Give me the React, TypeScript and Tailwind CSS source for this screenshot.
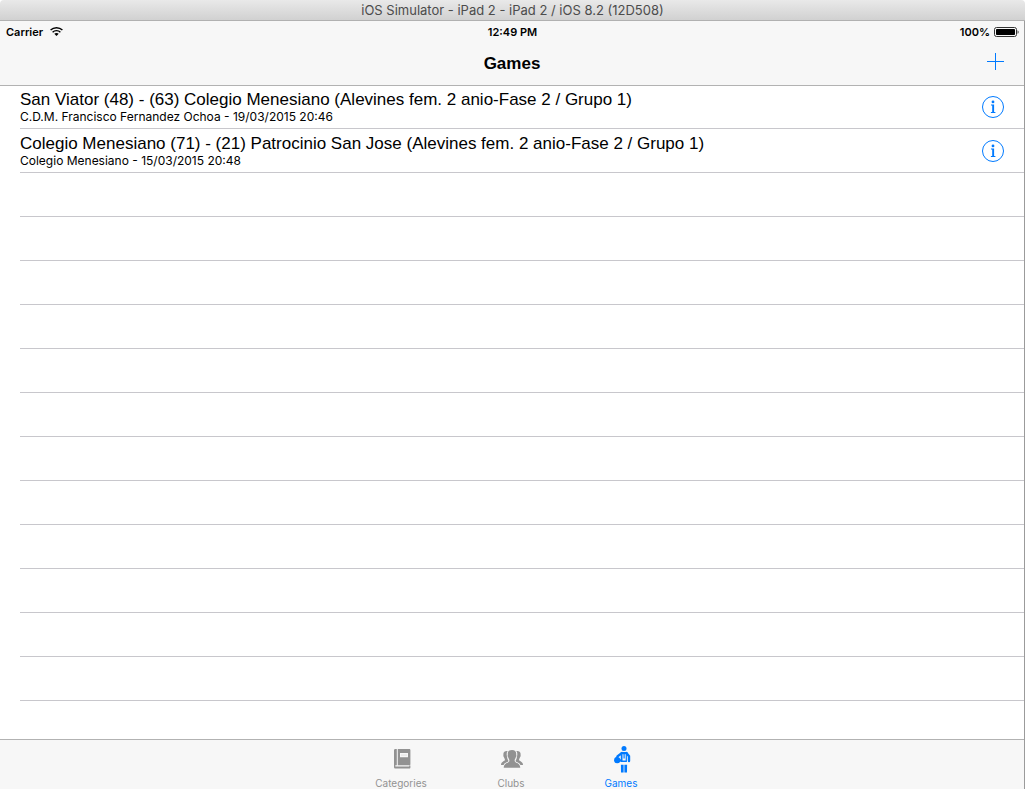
import React from "react";

type Game = { title: string; detail: string };

const games: Game[] = [
  {
    title: "San Viator (48) - (63) Colegio Menesiano (Alevines fem. 2 anio-Fase 2 / Grupo 1)",
    detail: "C.D.M. Francisco Fernandez Ochoa - 19/03/2015 20:46",
  },
  {
    title: "Colegio Menesiano (71) - (21) Patrocinio San Jose (Alevines fem. 2 anio-Fase 2 / Grupo 1)",
    detail: "Colegio Menesiano - 15/03/2015 20:48",
  },
];

const emptyRows = Array.from({ length: 12 }, (_, i) => i);

function WifiIcon() {
  return (
    <svg className="h-[9px] w-[13px]" viewBox="0 0 13 9" fill="none" stroke="#000" strokeWidth="1.4" aria-hidden="true">
      <path d="M0.6 3.1C3.8-.1 9.2-.1 12.4 3.1" />
      <path d="M2.6 5.2c2.1-2.1 5.7-2.1 7.8 0" />
      <path d="M6.5 9 4.3 6.7c1.2-1.1 3.2-1.1 4.4 0z" fill="#000" stroke="none" />
    </svg>
  );
}

function BatteryIcon() {
  return (
    <svg className="h-[10px] w-[25px]" viewBox="0 0 25 10" aria-hidden="true">
      <rect x="0.5" y="0.5" width="22" height="9" rx="2" fill="none" stroke="#333" />
      <rect x="2" y="2" width="19" height="6" rx="0.8" fill="#000" />
      <path d="M23.6 3.2c1.3.4 1.3 3.2 0 3.6z" fill="#222" />
    </svg>
  );
}

function PlusIcon() {
  return (
    <svg className="h-[17px] w-[17px]" viewBox="0 0 17 17" stroke="#007aff" aria-hidden="true">
      <path d="M8.5 0v17M0 8.5h17" />
    </svg>
  );
}

function InfoIcon() {
  return (
    <svg className="h-[22px] w-[22px]" viewBox="0 0 22 22" aria-hidden="true">
      <circle cx="11" cy="11" r="10.5" fill="none" stroke="#007aff" strokeWidth="1" />
      <circle cx="11" cy="5.9" r="1.4" fill="#007aff" />
      <path d="M9 8.5h3.100v7.500h1.300v1H8.900v-1h1.300V9.400H9z" fill="#007aff" />
    </svg>
  );
}

function BookIcon() {
  return (
    <svg className="h-5 w-[17px]" viewBox="0 0 17 20" fill="currentColor" aria-hidden="true">
      <path d="M1.3 0H2.8V16.2H1.6c-.5 0-.5 1.2 0 1.2H15.2V16.4H16.4V18.6c0 .6-.4 1-1 1H1.6C.6 19.6 0 18.9 0 18V1.3C0 .6.6 0 1.3 0z" />
      <path fillRule="evenodd" d="M3.8 0H15.3c.6 0 1.1.5 1.1 1.1V15.2c0 .6-.5 1-1.1 1H3.8zM6 4v4.2h8V4z" />
      <path d="M7 5.600h6v1H7z" opacity="0.2" />
    </svg>
  );
}

function ClubsIcon() {
  return (
    <svg className="h-[18px] w-[22px]" viewBox="0 0 22 18" fill="currentColor" aria-hidden="true">
      <path d="M6.700 1C4.100.6 2.200 2 2.400 4.300c0 .5.1.8-.1 1.200.1 1.200.5 1.500.9 2.200.2 1 .8 1.300.7 2.200C3.600 11.200 0 11.300 0 15h2.600c.8-2.600 4.500-2.600 4.900-4C6.600 9.600 6.200 8.200 6 6.700 5.500 4 5.500 2.400 6.700 1z" />
      <path d="M15.300 1c2.600-.4 4.500 1 4.300 3.300 0 .5-.1.800.1 1.200-.1 1.200-.5 1.500-.9 2.200-.2 1-.8 1.300-.7 2.200.3 1.300 3.900 1.400 3.900 5.100h-2.600c-.8-2.600-4.500-2.600-4.900-4 .9-1.400 1.300-2.800 1.500-4.300.5-2.700.5-4.300-.7-5.700z" />
      <path d="M11 0c3.100 0 4.500 1.800 4.200 4.500 0 .7.3.8.2 1.500-.1 1-.5 1.100-.8 1.800-.3 1.200-1 1.600-1 2.600 0 2.800 5.400 1.900 5.700 7.400H2.700c.3-5.500 5.700-4.600 5.700-7.400 0-1-.7-1.400-1-2.600-.3-.7-.7-.8-.8-1.800-.1-.7.2-.8.2-1.500C6.500 1.800 7.900 0 11 0z" />
    </svg>
  );
}

function PlayerIcon() {
  return (
    <svg className="h-[27px] w-[17px]" viewBox="0 0 17 27" fill="currentColor" aria-hidden="true">
      <circle cx="10" cy="2.5" r="2.5" />
      <circle cx="3.200" cy="14.200" r="3.100" />
      <path d="M8 7 3.600 10.300 2.300 13.500" fill="none" stroke="currentColor" strokeWidth="2.3" strokeLinecap="round" />
      <path d="M4.500 15.200 7.800 14" fill="none" stroke="currentColor" strokeWidth="2" />
      <path d="M12.400 7 15 10.200V15" fill="none" stroke="currentColor" strokeWidth="2.4" strokeLinecap="round" />
      <path fillRule="evenodd" d="M6.800 6h6.600v2.200H6.800zM6.800 8h1.700v6.600h3.200V8h1.200v8H6.800z" />
      <path d="M9.500 8h1.200v4.500H9.500z" />
      <path d="M6.900 18.700h2.700V26.500H7zM10.400 18.700h2.700l-.1 7.800h-2.600z" />
    </svg>
  );
}

const tabs = [
  { label: "Categories", icon: <BookIcon />, active: false },
  { label: "Clubs", icon: <ClubsIcon />, active: false },
  { label: "Games", icon: <PlayerIcon />, active: true },
];

export default function App() {
  return (
    <div className="flex h-screen flex-col overflow-hidden rounded-t bg-white font-['Liberation_Sans',Arial,sans-serif] text-black">
      <div className="flex h-[21px] shrink-0 items-center justify-center border-b border-[#b1b1b1] bg-linear-to-b from-[#e9e9e9] to-[#d1d1d1] font-[Inter,sans-serif] text-[13px] leading-5 text-[#4c4c4c]">
        iOS Simulator - iPad 2 - iPad 2 / iOS 8.2 (12D508)
      </div>

      <div className="flex min-h-0 flex-1 flex-col border-r border-[#9b9b9b]">
        <header className="h-[65px] shrink-0 border-b border-[#b2b2b2] bg-[#f7f7f7]">
          <div className="grid h-[21px] grid-cols-3 items-center pr-[5px] pl-[6px] font-[Inter,sans-serif] text-[11px] leading-4 font-semibold">
            <div className="flex items-center gap-[7px]">
              Carrier
              <WifiIcon />
            </div>
            <time className="text-center">12:49 PM</time>
            <div className="flex items-center justify-end gap-1">
              100%
              <BatteryIcon />
            </div>
          </div>
          <div className="grid h-[43px] grid-cols-3 items-center px-5">
            <h1 className="col-start-2 text-center text-[17px] leading-5 font-bold">Games</h1>
            <button type="button" aria-label="Add game" className="mb-1 justify-self-end">
              <PlusIcon />
            </button>
          </div>
        </header>

        <main className="min-h-0 flex-1 overflow-hidden pl-5">
          <ul className="-mt-px">
            {games.map((game) => (
              <li key={game.title} className="flex h-11 items-center justify-between border-b border-[#c8c7cc] pr-5">
                <div className="pt-0.5">
                  <h2 className="text-[17px] leading-[18px]">{game.title}</h2>
                  <p className="font-[Inter,sans-serif] text-[12px] leading-4">{game.detail}</p>
                </div>
                <button type="button" aria-label={`Details for ${game.title}`}>
                  <InfoIcon />
                </button>
              </li>
            ))}
            {emptyRows.map((row) => (
              <li key={row} className="h-11 border-b border-[#c8c7cc]" />
            ))}
          </ul>
        </main>

        <nav className="flex h-[50px] shrink-0 justify-center gap-[34px] border-t border-[#b2b2b2] bg-[#f7f7f7] pr-0.5">
          {tabs.map((tab) => (
            <a
              key={tab.label}
              href="#"
              aria-current={tab.active ? "page" : undefined}
              className={`flex w-[76px] flex-col items-center gap-0.5 pt-[3px] font-[Inter,sans-serif] text-[10px] leading-3 ${tab.active ? "text-[#007aff]" : "text-[#929292]"}`}
            >
              <span className="flex h-8 items-center pl-0.5">{tab.icon}</span>
              {tab.label}
            </a>
          ))}
        </nav>
      </div>
    </div>
  );
}
